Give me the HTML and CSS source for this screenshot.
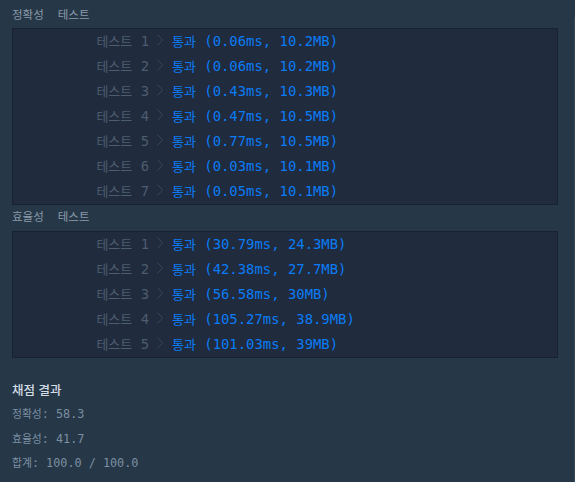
FILE: index.html
```html
<!DOCTYPE html>
<html lang="ko">
<head>
<meta charset="utf-8">
<link rel="stylesheet" href="styles.css">
</head>
<body>
<div class="page">
  <div class="section-title"><span>정확성</span><span class="gap">테스트</span></div>
  <div class="box">
    <div class="row"><span class="label"><span class="ko">테스트</span> 1</span><svg class="chev" viewBox="0 0 6 12"><polyline points="0.5,0.5 5.5,6 0.5,11.5"/></svg><span class="res"><span class="ko">통과</span> (0.06ms, 10.2MB)</span></div>
    <div class="row"><span class="label"><span class="ko">테스트</span> 2</span><svg class="chev" viewBox="0 0 6 12"><polyline points="0.5,0.5 5.5,6 0.5,11.5"/></svg><span class="res"><span class="ko">통과</span> (0.06ms, 10.2MB)</span></div>
    <div class="row"><span class="label"><span class="ko">테스트</span> 3</span><svg class="chev" viewBox="0 0 6 12"><polyline points="0.5,0.5 5.5,6 0.5,11.5"/></svg><span class="res"><span class="ko">통과</span> (0.43ms, 10.3MB)</span></div>
    <div class="row"><span class="label"><span class="ko">테스트</span> 4</span><svg class="chev" viewBox="0 0 6 12"><polyline points="0.5,0.5 5.5,6 0.5,11.5"/></svg><span class="res"><span class="ko">통과</span> (0.47ms, 10.5MB)</span></div>
    <div class="row"><span class="label"><span class="ko">테스트</span> 5</span><svg class="chev" viewBox="0 0 6 12"><polyline points="0.5,0.5 5.5,6 0.5,11.5"/></svg><span class="res"><span class="ko">통과</span> (0.77ms, 10.5MB)</span></div>
    <div class="row"><span class="label"><span class="ko">테스트</span> 6</span><svg class="chev" viewBox="0 0 6 12"><polyline points="0.5,0.5 5.5,6 0.5,11.5"/></svg><span class="res"><span class="ko">통과</span> (0.03ms, 10.1MB)</span></div>
    <div class="row"><span class="label"><span class="ko">테스트</span> 7</span><svg class="chev" viewBox="0 0 6 12"><polyline points="0.5,0.5 5.5,6 0.5,11.5"/></svg><span class="res"><span class="ko">통과</span> (0.05ms, 10.1MB)</span></div>
  </div>
  <div class="section-title"><span>효율성</span><span class="gap">테스트</span></div>
  <div class="box">
    <div class="row"><span class="label"><span class="ko">테스트</span> 1</span><svg class="chev" viewBox="0 0 6 12"><polyline points="0.5,0.5 5.5,6 0.5,11.5"/></svg><span class="res"><span class="ko">통과</span> (30.79ms, 24.3MB)</span></div>
    <div class="row"><span class="label"><span class="ko">테스트</span> 2</span><svg class="chev" viewBox="0 0 6 12"><polyline points="0.5,0.5 5.5,6 0.5,11.5"/></svg><span class="res"><span class="ko">통과</span> (42.38ms, 27.7MB)</span></div>
    <div class="row"><span class="label"><span class="ko">테스트</span> 3</span><svg class="chev" viewBox="0 0 6 12"><polyline points="0.5,0.5 5.5,6 0.5,11.5"/></svg><span class="res"><span class="ko">통과</span> (56.58ms, 30MB)</span></div>
    <div class="row"><span class="label"><span class="ko">테스트</span> 4</span><svg class="chev" viewBox="0 0 6 12"><polyline points="0.5,0.5 5.5,6 0.5,11.5"/></svg><span class="res"><span class="ko">통과</span> (105.27ms, 38.9MB)</span></div>
    <div class="row"><span class="label"><span class="ko">테스트</span> 5</span><svg class="chev" viewBox="0 0 6 12"><polyline points="0.5,0.5 5.5,6 0.5,11.5"/></svg><span class="res"><span class="ko">통과</span> (101.03ms, 39MB)</span></div>
  </div>
  <div class="summary">
    <div class="summary-title">채점 결과</div>
    <div class="line"><span class="ko-s">정확성</span>: 58.3</div>
    <div class="line"><span class="ko-s">효율성</span>: 41.7</div>
    <div class="line"><span class="ko-s">합계</span>: 100.0 / 100.0</div>
  </div>
</div>
</body>
</html>
```

FILE: styles.css
```css
html, body {
  margin: 0;
  padding: 0;
  background: #263747;
}
body::after {
  content: "";
  position: fixed;
  top: 17px;
  bottom: 0;
  right: 0;
  width: 1px;
  background: #34475b;
}
.page {
  padding: 5px 17px 0 12px;
  font-family: "DejaVu Sans Mono", "Noto Sans CJK KR", monospace;
}
.section-title {
  font-family: "Noto Sans CJK KR", "Noto Sans", sans-serif;
  font-size: 11.5px;
  line-height: 18px;
  height: 18px;
  color: #8a9aaa;
  display: flex;
  margin-bottom: 5px;
}
.section-title .gap {
  margin-left: 14px;
}
.box + .section-title {
  margin-top: 2px;
  margin-bottom: 6px;
}
.box {
  background: #202b3d;
  border: 1px solid #172130;
}
.row {
  height: 22px;
  padding-bottom: 3px;
  display: flex;
  align-items: center;
  font-size: 13.9px;
}
.label {
  width: 136px;
  text-align: right;
  color: #4d5d6f;
  white-space: pre;
}
.ko {
  font-family: "Noto Sans CJK KR", sans-serif;
  font-size: 13px;
}
.chev {
  width: 6px;
  height: 12px;
  margin-left: 8px;
  margin-right: 9px;
  fill: none;
  stroke: #38485a;
  stroke-width: 1;
}
.res {
  color: #0b7cf6;
  white-space: pre;
}
.summary {
  margin-top: 22px;
}
.summary-title {
  font-family: "Noto Sans CJK KR", "Noto Sans", sans-serif;
  font-size: 12.5px;
  font-weight: 500;
  line-height: 20px;
  color: #d3dce4;
  margin-bottom: 2px;
}
.line {
  font-size: 11.8px;
  line-height: 23.5px;
  color: #7b8fa3;
  white-space: pre;
}
.ko-s {
  font-family: "Noto Sans CJK KR", sans-serif;
  font-size: 10.8px;
}
```
